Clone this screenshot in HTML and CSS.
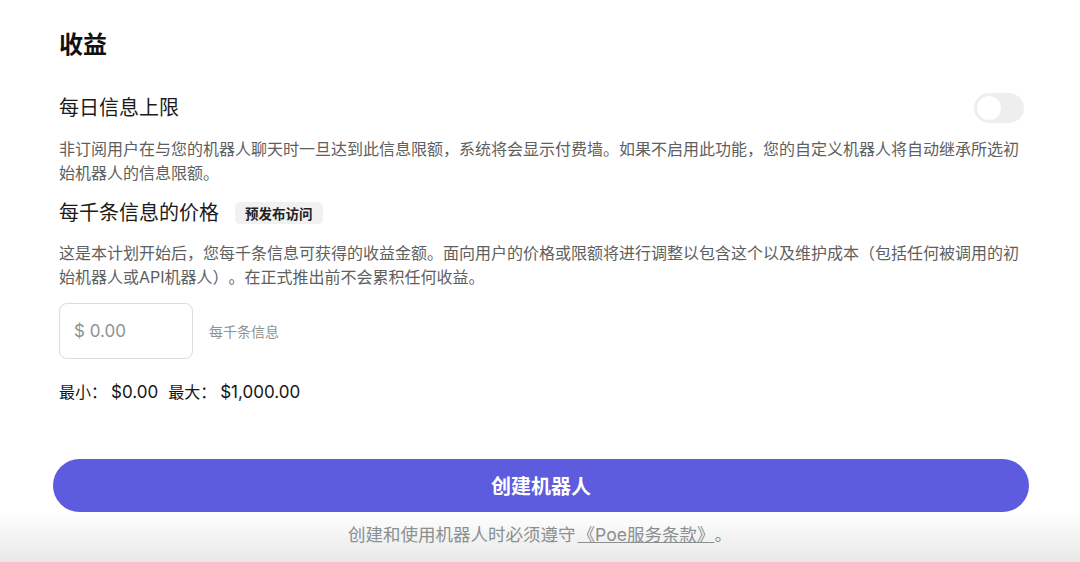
FILE: index.html
```html
<!DOCTYPE html>
<html lang="zh-CN">
<head>
<meta charset="utf-8">
<title>收益</title>
<link rel="stylesheet" href="styles.css">
</head>
<body>
<main class="content">
  <h2 class="heading">收益</h2>

  <div class="row row-first">
    <div class="row-title">每日信息上限</div>
    <div class="toggle"><span class="knob"></span></div>
  </div>
  <p class="desc">非订阅用户在与您的机器人聊天时一旦达到此信息限额，系统将会显示付费墙。如果不启用此功能，您的自定义机器人将自动继承所选初始机器人的信息限额。</p>

  <div class="row row-second">
    <div class="row-title">每千条信息的价格</div>
    <span class="badge">预发布访问</span>
  </div>
  <p class="desc">这是本计划开始后，您每千条信息可获得的收益金额。面向用户的价格或限额将进行调整以包含这个以及维护成本（包括任何被调用的初始机器人或API机器人）。在正式推出前不会累积任何收益。</p>

  <div class="price-row">
    <div class="price-input"><span class="placeholder">$ 0.00</span></div>
    <span class="price-unit">每千条信息</span>
  </div>

  <div class="limits">
    <span class="limit">最小：<span class="num">$0.00</span></span>
    <span class="limit">最大：<span class="num">$1,000.00</span></span>
  </div>
</main>

<footer class="footer">
  <div class="btn-wrap">
    <button class="create-btn">创建机器人</button>
  </div>
  <div class="terms">创建和使用机器人时必须遵守<a class="terms-link" href="#">《Poe服务条款》</a>。</div>
</footer>
</body>
</html>
```

FILE: styles.css
```css
* { box-sizing: border-box; }

html, body {
  margin: 0;
  padding: 0;
  background: #ffffff;
}

body {
  font-family: Inter, "Noto Sans CJK SC", "Noto Sans", sans-serif;
  color: #1b1b1b;
  width: 1080px;
  height: 562px;
  overflow: hidden;
  text-spacing-trim: space-all;
}

.content {
  padding: 29px 56px 0 59px;
}

.heading {
  margin: 0;
  font-size: 24px;
  line-height: 32px;
  font-weight: 700;
  color: #111;
}

.row {
  display: flex;
  align-items: center;
}

.row-first {
  justify-content: space-between;
  margin-top: 32px;
  height: 30px;
}

.row-second {
  margin-top: 14px;
  height: 28px;
  gap: 16px;
}

.row-title {
  font-size: 20px;
  line-height: 28px;
  color: #1b1b1b;
}

.toggle {
  width: 50px;
  height: 30px;
  border-radius: 15px;
  background: #eeeeee;
  display: flex;
  align-items: center;
  padding-left: 3px;
}

.knob {
  width: 24px;
  height: 24px;
  border-radius: 50%;
  background: #ffffff;
}

.desc {
  margin: 14px 0 0;
  font-size: 16px;
  line-height: 24px;
  color: #5e6060;
}

.badge {
  display: inline-flex;
  align-items: center;
  height: 22px;
  padding: 0 10px;
  border-radius: 5px;
  background: #f1f1f1;
  font-size: 13.5px;
  font-weight: 700;
  color: #222;
}

.price-row {
  display: flex;
  align-items: center;
  gap: 16px;
  margin-top: 14px;
}

.price-input {
  width: 134px;
  height: 56px;
  border: 1px solid #dcdcdc;
  border-radius: 8px;
  display: flex;
  align-items: center;
  padding-left: 14px;
}

.placeholder {
  font-size: 17px;
  color: #8d9393;
}

.price-unit {
  font-size: 14px;
  color: #8d9393;
}

.limits {
  margin-top: 21px;
  font-size: 16px;
  line-height: 24px;
  color: #151515;
  display: flex;
  gap: 10px;
}

.num {
  margin-left: 4px;
  font-size: 17px;
}

.footer {
  margin-top: 55px;
}

.btn-wrap {
  padding: 0 51px 0 53px;
}

.create-btn {
  display: block;
  width: 100%;
  height: 53px;
  border: none;
  border-radius: 27px;
  background: #5d5cde;
  color: #ffffff;
  font-family: Inter, "Noto Sans CJK SC", sans-serif;
  font-size: 20px;
  font-weight: 700;
}

.terms {
  height: 50px;
  padding-top: 11px;
  text-align: center;
  font-size: 17.5px;
  line-height: 24px;
  color: #8a8f8f;
  background: linear-gradient(#ffffff, #e8e8e8);
}

.terms-link {
  color: #8a8f8f;
  text-decoration: underline;
  margin-left: 2px;
}
```
